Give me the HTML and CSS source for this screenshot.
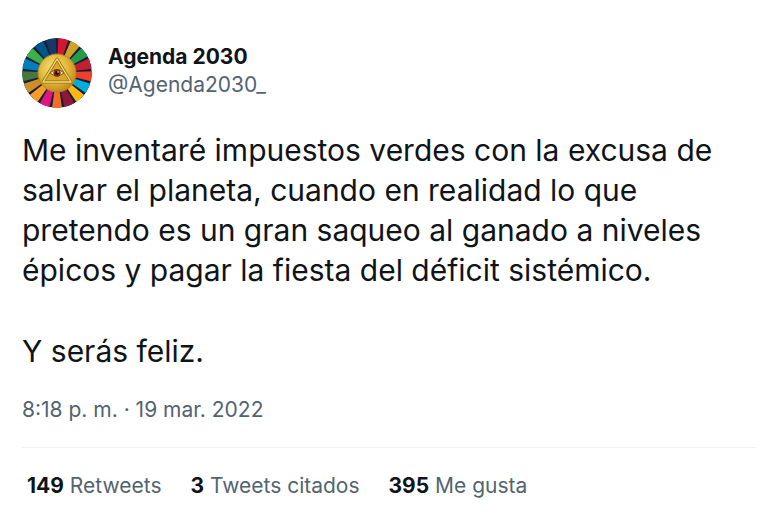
FILE: index.html
```html
<!DOCTYPE html>
<html lang="es">
<head>
<meta charset="utf-8">
<meta name="viewport" content="width=device-width, initial-scale=1">
<title>Agenda 2030</title>
<link rel="stylesheet" href="styles.css">
</head>
<body>
<article class="tweet">
  <header class="author">
    <svg class="avatar" viewBox="-35 -35 70 70" role="img" aria-label="Agenda 2030">
      <defs>
        <radialGradient id="gold" cx="42%" cy="38%" r="62%">
          <stop offset="0" stop-color="#fbe77c"/>
          <stop offset="0.6" stop-color="#e3b73a"/>
          <stop offset="1" stop-color="#c08c1c"/>
        </radialGradient>
      </defs>
      <circle r="35" fill="#14203a"/>
      <g class="wheel" transform="rotate(-90)">
        <circle r="26" pathLength="170" stroke="#d5162f" stroke-dashoffset="-1"/>
        <circle r="26" pathLength="170" stroke="#d3a029" stroke-dashoffset="-11"/>
        <circle r="26" pathLength="170" stroke="#279b48" stroke-dashoffset="-21"/>
        <circle r="26" pathLength="170" stroke="#c31f33" stroke-dashoffset="-31"/>
        <circle r="26" pathLength="170" stroke="#ef402b" stroke-dashoffset="-41"/>
        <circle r="26" pathLength="170" stroke="#00aed9" stroke-dashoffset="-51"/>
        <circle r="26" pathLength="170" stroke="#fdb713" stroke-dashoffset="-61"/>
        <circle r="26" pathLength="170" stroke="#8f1838" stroke-dashoffset="-71"/>
        <circle r="26" pathLength="170" stroke="#f36d25" stroke-dashoffset="-81"/>
        <circle r="26" pathLength="170" stroke="#e11484" stroke-dashoffset="-91"/>
        <circle r="26" pathLength="170" stroke="#f99d26" stroke-dashoffset="-101"/>
        <circle r="26" pathLength="170" stroke="#cf8d2a" stroke-dashoffset="-111"/>
        <circle r="26" pathLength="170" stroke="#48773e" stroke-dashoffset="-121"/>
        <circle r="26" pathLength="170" stroke="#007dbc" stroke-dashoffset="-131"/>
        <circle r="26" pathLength="170" stroke="#3eb049" stroke-dashoffset="-141"/>
        <circle r="26" pathLength="170" stroke="#02558b" stroke-dashoffset="-151"/>
        <circle r="26" pathLength="170" stroke="#183668" stroke-dashoffset="-161"/>
      </g>
      <circle r="19" fill="url(#gold)" stroke="#b58420"/>
      <path d="M0-14 14 9H-14Z" fill="#d9a92e" stroke="#94701a" stroke-width="3" stroke-linejoin="round"/>
      <path d="M0-14 14 9H-14Z" fill="none" stroke="#f6dc6c" stroke-width="1.400" stroke-linejoin="round"/>
      <path d="M-7 0Q0-7 7 0Q0 6-7 0Z" fill="#f6e6bd" stroke="#7d5418"/>
      <circle r="3.700" fill="#8c2818"/>
      <circle r="1.800" fill="#180b0b"/>
      <circle cx="1" cy="-1" r="0.800" fill="#fff"/>
    </svg>
    <div class="names">
      <a class="name" href="#">Agenda 2030</a>
      <a class="handle" href="#">@Agenda2030_</a>
    </div>
  </header>
  <div class="message">
    <p>Me inventaré impuestos verdes con la excusa de salvar el planeta, cuando en realidad lo que pretendo es un gran saqueo al ganado a niveles épicos y pagar la fiesta del déficit sistémico.</p>
    <p>Y serás feliz.</p>
  </div>
  <a class="date" href="#"><time datetime="2022-03-19T20:18">8:18 p. m. · 19 mar. 2022</time></a>
  <footer class="stats">
    <a href="#"><strong>149</strong> Retweets</a>
    <a href="#"><strong>3</strong> Tweets citados</a>
    <a href="#"><strong>395</strong> Me gusta</a>
  </footer>
</article>
</body>
</html>
```
FILE: styles.css
```css
* {
  box-sizing: border-box;
}

body {
  margin: 0;
  background: #fff;
  color: #0f1419;
  font-family: Inter, "Liberation Sans", sans-serif;
  font-size: 21px;
  line-height: 28px;
}

a {
  color: #536471;
  text-decoration: none;
}

.tweet {
  display: flex;
  flex-direction: column;
  padding: 38px 22px 24px;
}

.author {
  display: flex;
  align-items: center;
  gap: 16px;
}

.avatar {
  width: 70px;
  height: 70px;
  border-radius: 50%;
}

.wheel circle {
  fill: none;
  stroke-width: 18;
  stroke-dasharray: 8 162;
}

.names {
  display: flex;
  flex-direction: column;
  padding-bottom: 4px;
}

.names .name {
  color: #0f1419;
  font-weight: 700;
}

.message {
  display: flex;
  flex-direction: column;
  gap: 41px;
  margin-top: 22px;
  font-size: 30px;
  line-height: 40px;
}

.message p {
  margin: 0;
}

.date {
  margin-top: 25px;
}

.stats {
  display: flex;
  gap: 29px;
  margin-top: 23px;
  padding: 24px 5px 0;
  border-top: 1px solid #eff3f4;
}

.stats strong {
  color: #0f1419;
  font-weight: 700;
}
```
